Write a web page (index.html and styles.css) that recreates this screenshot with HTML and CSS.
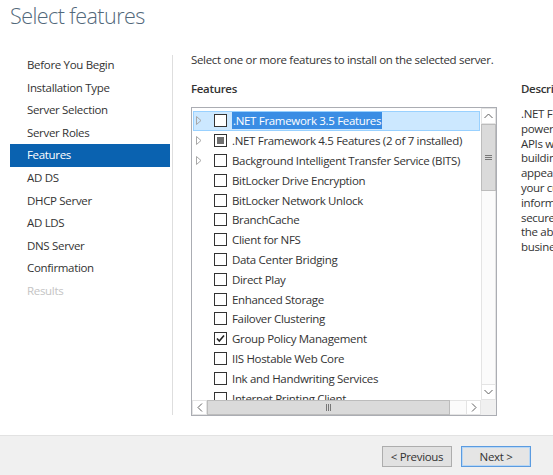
FILE: index.html
```html
<!DOCTYPE html>
<html>
<head>
<meta charset="utf-8">
<link rel="stylesheet" href="styles.css">
</head>
<body>
<div class="window">
  <header class="header"><h1 class="title">Select features</h1></header>
  <div class="main">
    <nav class="nav">
      <div class="nav-item">Before You Begin</div>
      <div class="nav-item">Installation Type</div>
      <div class="nav-item">Server Selection</div>
      <div class="nav-item">Server Roles</div>
      <div class="nav-item active">Features</div>
      <div class="nav-item">AD DS</div>
      <div class="nav-item">DHCP Server</div>
      <div class="nav-item">AD LDS</div>
      <div class="nav-item">DNS Server</div>
      <div class="nav-item">Confirmation</div>
      <div class="nav-item disabled">Results</div>
    </nav>
    <div class="sep"></div>
    <section class="content">
      <p class="intro">Select one or more features to install on the selected server.</p>
      <div class="cols">
        <div class="col-list">
          <div class="label">Features</div>
          <div class="listbox">
            <div class="list-area">
              <div class="rows">
                <div class="row selected">
                  <span class="exp"><svg width="6" height="9" viewBox="0 0 6 9"><path d="M0.5 0.5 L5 4.5 L0.5 8.5 Z" fill="none" stroke="#a8a8a8"/></svg></span>
                  <span class="cb"></span>
                  <span class="txt"><span class="hl">.NET Framework 3.5 Features</span></span>
                </div>
                <div class="row">
                  <span class="exp"><svg width="6" height="9" viewBox="0 0 6 9"><path d="M0.5 0.5 L5 4.5 L0.5 8.5 Z" fill="none" stroke="#a8a8a8"/></svg></span>
                  <span class="cb partial"><span class="fill"></span></span>
                  <span class="txt">.NET Framework 4.5 Features (2 of 7 installed)</span>
                </div>
                <div class="row">
                  <span class="exp"><svg width="6" height="9" viewBox="0 0 6 9"><path d="M0.5 0.5 L5 4.5 L0.5 8.5 Z" fill="none" stroke="#a8a8a8"/></svg></span>
                  <span class="cb"></span>
                  <span class="txt">Background Intelligent Transfer Service (BITS)</span>
                </div>
                <div class="row"><span class="exp"></span><span class="cb"></span><span class="txt">BitLocker Drive Encryption</span></div>
                <div class="row"><span class="exp"></span><span class="cb"></span><span class="txt">BitLocker Network Unlock</span></div>
                <div class="row"><span class="exp"></span><span class="cb"></span><span class="txt">BranchCache</span></div>
                <div class="row"><span class="exp"></span><span class="cb"></span><span class="txt">Client for NFS</span></div>
                <div class="row"><span class="exp"></span><span class="cb"></span><span class="txt">Data Center Bridging</span></div>
                <div class="row"><span class="exp"></span><span class="cb"></span><span class="txt">Direct Play</span></div>
                <div class="row"><span class="exp"></span><span class="cb"></span><span class="txt">Enhanced Storage</span></div>
                <div class="row"><span class="exp"></span><span class="cb"></span><span class="txt">Failover Clustering</span></div>
                <div class="row"><span class="exp"></span><span class="cb"><svg width="11" height="11" viewBox="0 0 11 11"><path d="M2 5.5 L4.3 8 L9 2.5" fill="none" stroke="#222" stroke-width="1.6"/></svg></span><span class="txt">Group Policy Management</span></div>
                <div class="row"><span class="exp"></span><span class="cb"></span><span class="txt">IIS Hostable Web Core</span></div>
                <div class="row"><span class="exp"></span><span class="cb"></span><span class="txt">Ink and Handwriting Services</span></div>
                <div class="row"><span class="exp"></span><span class="cb"></span><span class="txt">Internet Printing Client</span></div>
              </div>
              <div class="vscroll">
                <div class="sb-btn"><svg width="9" height="6" viewBox="0 0 9 6"><path d="M0.5 5 L4.5 1 L8.5 5" fill="none" stroke="#606060"/></svg></div>
                <div class="vthumb"><span class="grip-h"></span></div>
                <div class="vtrack"></div>
                <div class="sb-btn"><svg width="9" height="6" viewBox="0 0 9 6"><path d="M0.5 1 L4.5 5 L8.5 1" fill="none" stroke="#606060"/></svg></div>
              </div>
            </div>
            <div class="hscroll">
              <div class="sb-btn h"><svg width="6" height="9" viewBox="0 0 6 9"><path d="M5 0.5 L1 4.5 L5 8.5" fill="none" stroke="#606060"/></svg></div>
              <div class="hthumb"><span class="grip-v"></span></div>
              <div class="htrack"></div>
              <div class="sb-btn h"><svg width="6" height="9" viewBox="0 0 6 9"><path d="M1 0.5 L5 4.5 L1 8.5" fill="none" stroke="#606060"/></svg></div>
              <div class="corner"></div>
            </div>
          </div>
        </div>
        <div class="col-desc">
          <div class="label">Description</div>
          <p class="desc">.NET Framework 3.5 combines the<br>power of the .NET Framework 2.0<br>APIs with new technologies for<br>building applications that offer<br>appealing user interfaces, protect<br>your customers' personal identity<br>information, enable seamless and<br>secure communication, and provide<br>the ability to model a range of<br>business processes.</p>
        </div>
      </div>
    </section>
  </div>
  <footer class="footer">
    <button class="btn">&lt; Previous</button>
    <button class="btn primary">Next &gt;</button>
  </footer>
</div>
</body>
</html>
```

FILE: styles.css
```css
* { box-sizing: border-box; }
html, body { margin: 0; padding: 0; }
body {
  width: 553px;
  height: 475px;
  overflow: hidden;
  background: #ffffff;
  font-family: "Open Sans", "Noto Sans", sans-serif;
  font-size: 11.5px;
  letter-spacing: -0.32px;
  color: #333333;
}
.window { width: 553px; height: 475px; display: flex; flex-direction: column; }
.header { height: 52px; padding-left: 10px; padding-top: 1px; }
.title {
  margin: 0;
  font-weight: 300;
  font-size: 21.5px;
  line-height: 30px;
  color: #52687a;
  letter-spacing: -0.55px;
}
.main { height: 383px; display: flex; }
.nav { width: 170px; padding-left: 10px; padding-top: 2px; }
.nav-item {
  height: 22.6px;
  line-height: 22.6px;
  padding-left: 17px;
  color: #333333;
  white-space: nowrap;
}
.nav-item.active { background: #0a62b0; color: #ffffff; }
.nav-item.disabled { color: #c4c4c4; }
.sep { width: 1px; margin-left: 2px; margin-top: 3px; height: 360px; background: #dedede; }
.content { padding-left: 18px; flex: 1; min-width: 0; }
.intro { margin: 0; height: 16px; line-height: 16px; white-space: nowrap; }
.cols { display: flex; margin-top: 13px; }
.col-list { width: 306px; flex: none; }
.col-desc { margin-left: 24px; width: 210px; flex: none; }
.label { height: 16px; line-height: 16px; font-weight: 600; margin-bottom: 10px; white-space: nowrap; }
.desc { margin: 0; line-height: 14.8px; white-space: nowrap; }
.listbox {
  width: 306px;
  height: 309px;
  border: 1px solid #abadb3;
  display: flex;
  flex-direction: column;
  background: #ffffff;
}
.list-area { height: 292px; display: flex; }
.rows { width: 289px; padding-top: 3px; overflow: hidden; }
.row {
  height: 19.8px;
  display: flex;
  align-items: center;
  margin: 0 1px;
  padding-left: 2px;
  border: 1px solid transparent;
  white-space: nowrap;
}
.row.selected { background: #cce8ff; border-color: #99d1ff; }
.exp { width: 8px; height: 9px; display: flex; align-items: center; flex: none; }
.exp svg { display: block; }
.cb {
  width: 13px;
  height: 13px;
  margin-left: 10px;
  border: 1px solid #333333;
  background: #ffffff;
  flex: none;
  display: flex;
  align-items: center;
  justify-content: center;
}
.cb .fill { width: 7px; height: 7px; background: #6e6e6e; }
.cb svg { display: block; }
.txt { margin-left: 5px; }
.hl { background: #3a8de4; color: #ffffff; padding: 1px 1px; }
.vscroll {
  width: 15px;
  display: flex;
  flex-direction: column;
  background: #f0f0f0;
}
.sb-btn {
  height: 16px;
  width: 15px;
  flex: none;
  display: flex;
  align-items: center;
  justify-content: center;
  background: #ffffff;
  border: 1px solid #e4e4e4;
}
.sb-btn svg { display: block; }
.vthumb {
  height: 67px;
  background: #dadada;
  border: 1px solid #bcbcbc;
  display: flex;
  align-items: center;
  justify-content: center;
  flex: none;
}
.grip-h {
  width: 7px;
  height: 5px;
  border-top: 1px solid #777;
  border-bottom: 1px solid #777;
  background: linear-gradient(#777, #777) center / 7px 1px no-repeat;
}
.vtrack { flex: 1; background: #fbfbfb; border-left: 1px solid #e4e4e4; border-right: 1px solid #e4e4e4; }
.hscroll { height: 15px; display: flex; }
.sb-btn.h { height: 15px; width: 15px; }
.hthumb {
  width: 243px;
  background: #dadada;
  border: 1px solid #bcbcbc;
  display: flex;
  align-items: center;
  justify-content: center;
  flex: none;
}
.grip-v {
  width: 5px;
  height: 7px;
  border-left: 1px solid #777;
  border-right: 1px solid #777;
  background: linear-gradient(#777, #777) center / 1px 7px no-repeat;
}
.htrack { width: 16px; background: #fbfbfb; border-top: 1px solid #e4e4e4; border-bottom: 1px solid #e4e4e4; }
.corner { flex: 1; background: #f0f0f0; }
.footer {
  height: 40px;
  background: #f0f0f0;
  border-top: 1px solid #e2e2e2;
  display: flex;
  justify-content: flex-end;
  align-items: flex-start;
  padding-top: 10px;
  padding-right: 22px;
  gap: 9px;
}
.btn {
  width: 70px;
  height: 21px;
  padding: 0;
  font-family: "Open Sans", "Noto Sans", sans-serif;
  font-size: 11.5px;
  letter-spacing: -0.32px;
  color: #333333;
  background: #e1e1e1;
  border: 1px solid #adadad;
}
.btn.primary { border-color: #5b9be0; box-shadow: inset 0 0 0 1px #b8d7f5; background: #e5e5e5; }
```
